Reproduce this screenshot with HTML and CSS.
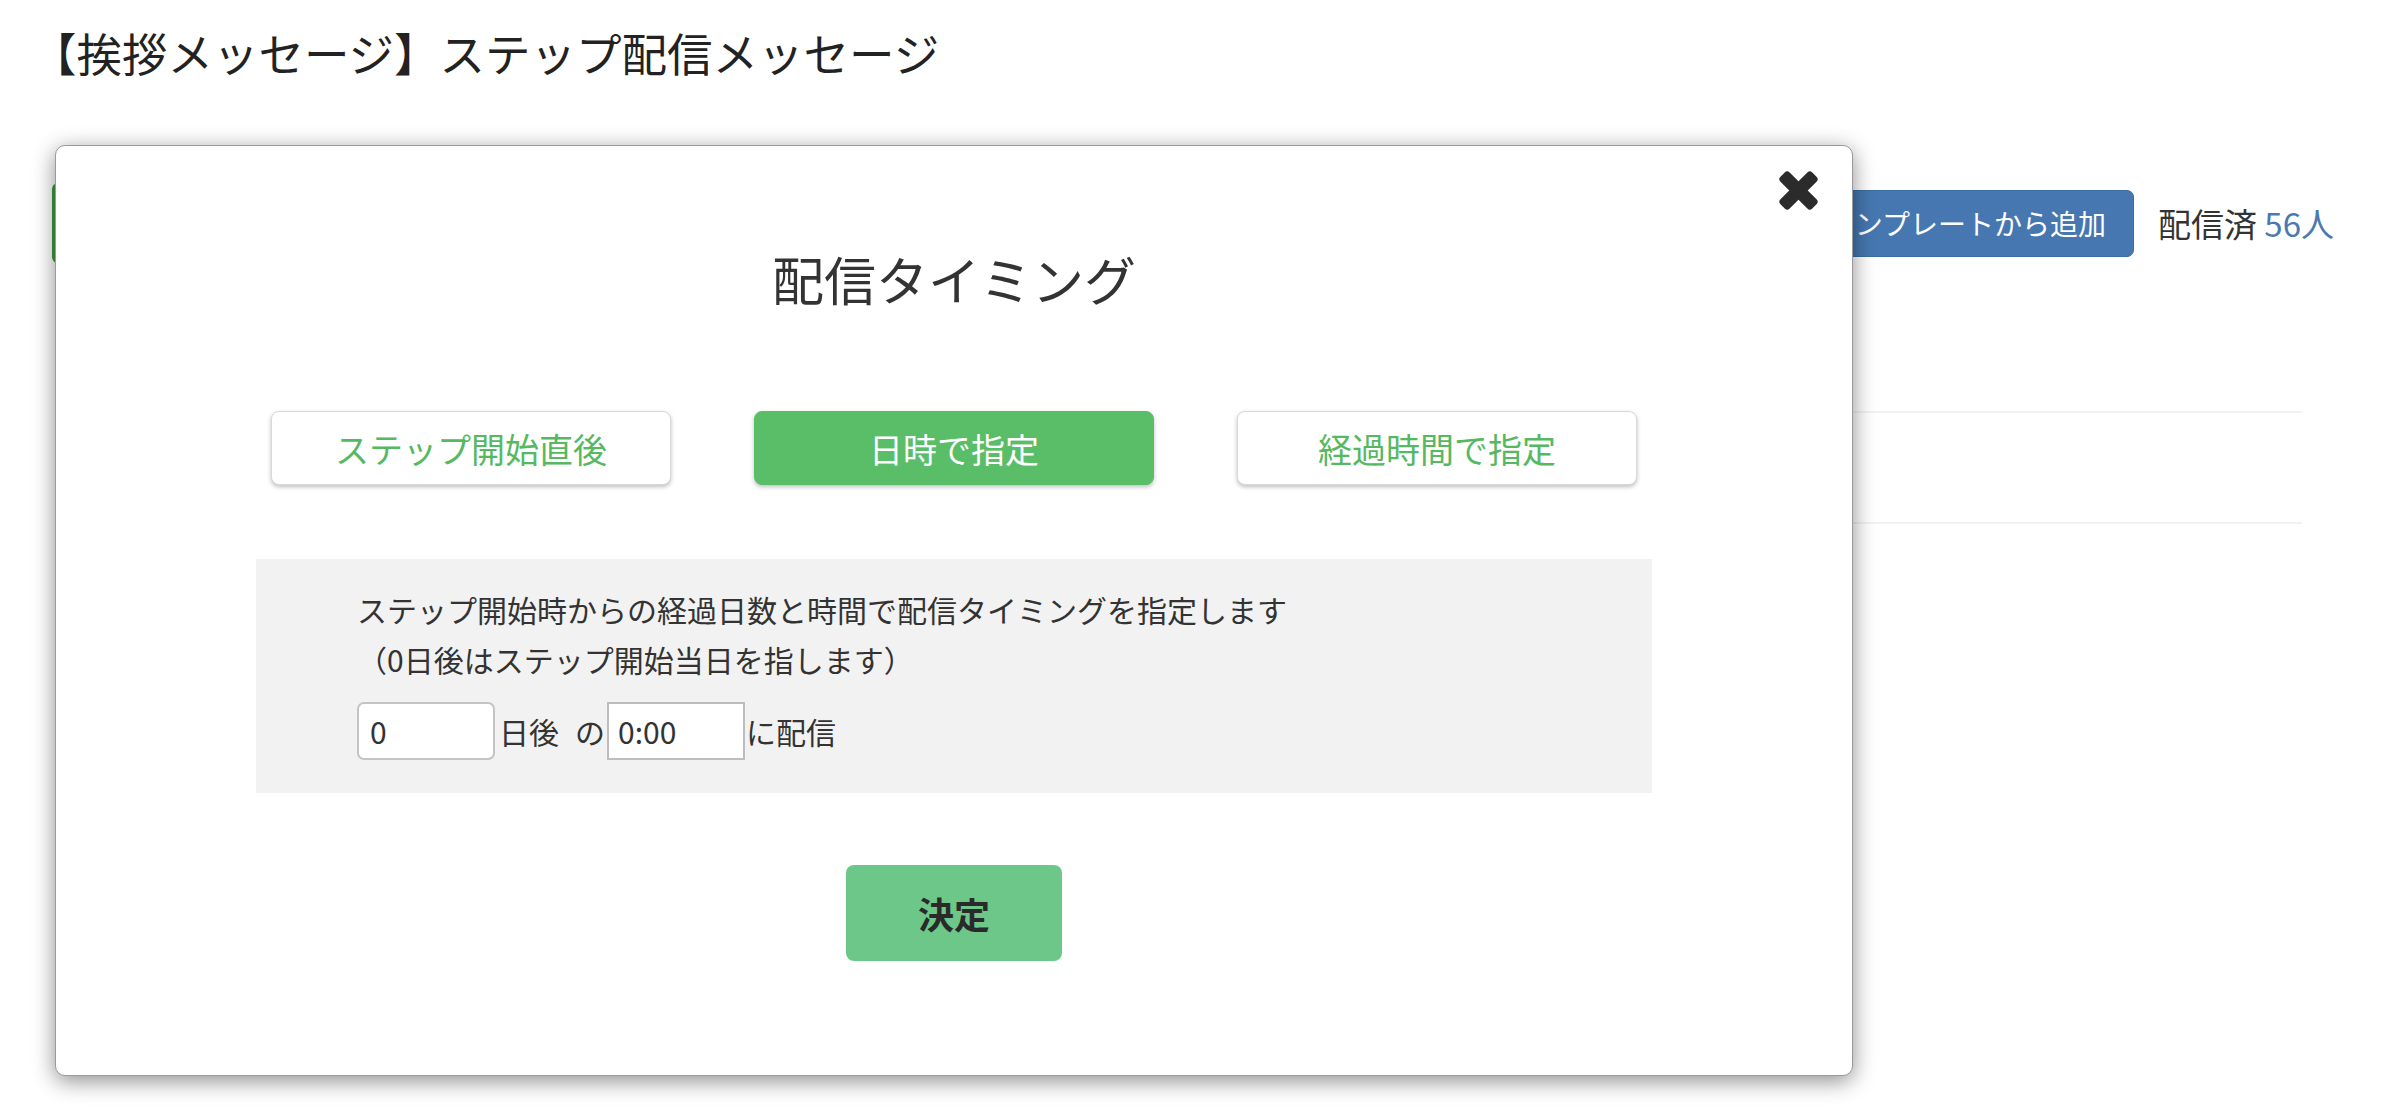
FILE: index.html
```html
<!DOCTYPE html>
<html lang="ja">
<head>
<meta charset="utf-8">
<title>ステップ配信メッセージ</title>
<link rel="stylesheet" href="styles.css">
</head>
<body>
<div class="page">
  <h1 class="page-title">【挨拶メッセージ】ステップ配信メッセージ</h1>
  <div class="toolbar">
    <div class="green-btn">新規作成</div>
    <div class="spacer"></div>
    <div class="blue-btn">テンプレートから追加</div>
    <div class="count">配信済 <span class="num">56人</span></div>
  </div>
  <div class="list">
    <div class="row"></div>
    <div class="row"></div>
  </div>
</div>

<div class="modal">
  <div class="close" aria-label="閉じる">
    <svg width="41" height="41" viewBox="0 0 41 41">
      <rect x="-2" y="14" width="45" height="13" rx="3.5" fill="#2b2b2b" transform="rotate(45 20.5 20.5)"/>
      <rect x="-2" y="14" width="45" height="13" rx="3.5" fill="#2b2b2b" transform="rotate(-45 20.5 20.5)"/>
    </svg>
  </div>
  <h2 class="modal-title">配信タイミング</h2>
  <div class="tabs">
    <div class="tab">ステップ開始直後</div>
    <div class="tab active">日時で指定</div>
    <div class="tab">経過時間で指定</div>
  </div>
  <div class="panel">
    <p class="line">ステップ開始時からの経過日数と時間で配信タイミングを指定します</p>
    <p class="line">（0日後はステップ開始当日を指します）</p>
    <div class="input-row">
      <input class="num-input" type="text" value="0">
      <span class="lbl-day">日後</span>
      <span class="lbl-no">の</span>
      <input class="time-input" type="text" value="0:00">
      <span class="lbl-send">に配信</span>
    </div>
  </div>
  <div class="actions">
    <div class="submit">決定</div>
  </div>
</div>
</body>
</html>
```

FILE: styles.css
```css
* { box-sizing: border-box; }

body {
  margin: 0;
  background: #fff;
  font-family: "Noto Sans CJK JP", "Noto Sans", sans-serif;
  color: #333;
}

.page {
  position: relative;
  width: 2394px;
  height: 1114px;
  overflow: hidden;
}

.page-title {
  margin: 0;
  padding: 22px 0 0 31px;
  font-size: 45.5px;
  line-height: 60px;
  font-weight: normal;
  color: #222;
}

.toolbar {
  display: flex;
  align-items: center;
  margin-top: 101px;
  padding: 0 60px 0 52px;
  height: 80px;
}

.green-btn {
  width: 220px;
  height: 80px;
  background: #3f9a43;
  border-radius: 6px;
  color: #fff;
  font-size: 28px;
  display: flex;
  align-items: center;
  justify-content: center;
}

.spacer { flex: 1; }

.blue-btn {
  height: 67px;
  padding: 0 27px;
  display: flex;
  align-items: center;
  background: #4677b0;
  border: 1px solid #3d6ca3;
  border-radius: 7px;
  color: #fff;
  font-size: 28px;
}

.count {
  margin-left: 24px;
  font-size: 33px;
  color: #333;
}

.count .num { color: #4a78b0; }

.list {
  margin: 148px 92px 0 70px;
}

.row {
  height: 111px;
  border-top: 2px solid #f2f2f2;
}

.modal {
  position: absolute;
  left: 55px;
  top: 145px;
  width: 1798px;
  height: 931px;
  background: #fff;
  border: 1px solid #9a9a9a;
  border-radius: 10px;
  box-shadow: 0 5px 22px rgba(0, 0, 0, 0.45);
}

.close {
  position: absolute;
  right: 33px;
  top: 24px;
  width: 41px;
  height: 41px;
}

.close svg { display: block; }

.modal-title {
  margin: 0;
  padding-top: 101px;
  text-align: center;
  font-size: 52px;
  line-height: 64px;
  font-weight: normal;
  color: #333;
}

.tabs {
  display: flex;
  justify-content: center;
  gap: 83px;
  margin-top: 100px;
}

.tab {
  width: 400px;
  height: 74px;
  display: flex;
  align-items: center;
  justify-content: center;
  font-size: 34px;
  color: #56b962;
  background: #fff;
  border: 1px solid #d9d9d9;
  border-radius: 8px;
  box-shadow: 0 2px 4px rgba(0, 0, 0, 0.25);
}

.tab.active {
  background: #5abd67;
  border-color: #5abd67;
  color: #fff;
}

.panel {
  width: 1396px;
  margin: 74px auto 0;
  padding: 25px 0 33px 101px;
  background: #f2f2f2;
  font-size: 30px;
  color: #333;
}

.line {
  margin: 0;
  line-height: 50px;
}

.input-row {
  display: flex;
  align-items: center;
  margin-top: 18px;
  height: 58px;
}

.num-input,
.time-input {
  width: 138px;
  height: 58px;
  font-family: "Noto Sans CJK JP", "Noto Sans", sans-serif;
  font-size: 30px;
  color: #333;
  background: #fff;
  outline: none;
}

.num-input {
  border: 2px solid #c4c4c4;
  border-radius: 7px;
  padding: 0 0 0 11px;
}

.time-input {
  border: 2px solid #bdbdbd;
  border-radius: 0;
  padding: 0 0 0 9px;
  margin-left: 2px;
}

.lbl-day { margin-left: 4px; }
.lbl-no { margin-left: 16px; }
.lbl-send { margin-left: 1px; }

.actions {
  display: flex;
  justify-content: center;
  margin-top: 72px;
}

.submit {
  width: 216px;
  height: 96px;
  display: flex;
  align-items: center;
  justify-content: center;
  background: #6cc788;
  border-radius: 8px;
  font-size: 36px;
  font-weight: bold;
  color: #2a2a2a;
}
```
